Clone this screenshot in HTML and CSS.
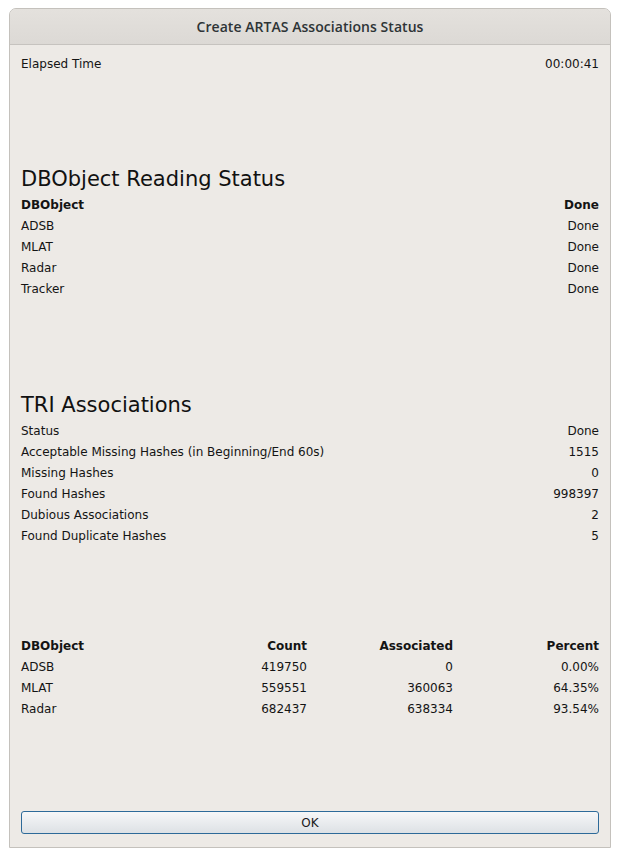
FILE: index.html
```html
<!DOCTYPE html>
<html>
<head>
<meta charset="utf-8">
<link rel="stylesheet" href="styles.css">
</head>
<body>
<div class="window">
  <div class="titlebar">Create ARTAS Associations Status</div>
  <div class="content">
    <div class="row"><span>Elapsed Time</span><span>00:00:41</span></div>

    <div class="spacer s1"></div>
    <h2 class="heading">DBObject Reading Status</h2>
    <div class="row bold"><span>DBObject</span><span>Done</span></div>
    <div class="row"><span>ADSB</span><span>Done</span></div>
    <div class="row"><span>MLAT</span><span>Done</span></div>
    <div class="row"><span>Radar</span><span>Done</span></div>
    <div class="row"><span>Tracker</span><span>Done</span></div>

    <div class="spacer s2"></div>
    <h2 class="heading">TRI Associations</h2>
    <div class="row"><span>Status</span><span>Done</span></div>
    <div class="row"><span>Acceptable Missing Hashes (in Beginning/End 60s)</span><span>1515</span></div>
    <div class="row"><span>Missing Hashes</span><span>0</span></div>
    <div class="row"><span>Found Hashes</span><span>998397</span></div>
    <div class="row"><span>Dubious Associations</span><span>2</span></div>
    <div class="row"><span>Found Duplicate Hashes</span><span>5</span></div>

    <div class="spacer s3"></div>
    <div class="grid bold"><span>DBObject</span><span class="r">Count</span><span class="r">Associated</span><span class="r">Percent</span></div>
    <div class="grid"><span>ADSB</span><span class="r">419750</span><span class="r">0</span><span class="r">0.00%</span></div>
    <div class="grid"><span>MLAT</span><span class="r">559551</span><span class="r">360063</span><span class="r">64.35%</span></div>
    <div class="grid"><span>Radar</span><span class="r">682437</span><span class="r">638334</span><span class="r">93.54%</span></div>

    <div class="spacer s4"></div>
    <button class="ok">OK</button>
  </div>
</div>
</body>
</html>
```
FILE: styles.css
```css
html, body {
  margin: 0;
  padding: 0;
  background: #ffffff;
}
body {
  padding: 8px 0 0 9px;
  font-family: "DejaVu Sans", sans-serif;
  font-size: 12px;
  color: #141414;
}
.window {
  width: 600px;
  height: 838px;
  border: 1px solid #c4c1bc;
  border-radius: 7px 7px 0 0;
  background: #edeae6;
  display: flex;
  flex-direction: column;
  overflow: hidden;
}
.titlebar {
  height: 35px;
  flex: none;
  border-bottom: 1px solid #c6c3bf;
  background: linear-gradient(#e4e1dd, #dcd9d5);
  display: flex;
  align-items: center;
  justify-content: center;
  font-family: "Open Sans", sans-serif;
  font-weight: 600;
  font-size: 14px;
  letter-spacing: 0.05px;
  color: #2e3436;
}
.content {
  flex: 1;
  display: flex;
  flex-direction: column;
  padding: 8px 11px 0 11px;
}
.row {
  height: 21px;
  display: flex;
  justify-content: space-between;
  align-items: center;
}
.bold {
  font-weight: bold;
}
.spacer {
  flex: none;
}
.s1 {
  height: 91px;
}
.s2 {
  height: 92px;
}
.s3 {
  height: 89px;
}
.s4 {
  height: 92px;
}
.heading {
  margin: 0 0 1px 0;
  height: 28px;
  line-height: 28px;
  font-size: 21px;
  font-weight: normal;
  color: #111;
}
.grid {
  height: 21px;
  display: grid;
  grid-template-columns: 140px 140px 140px 140px;
  column-gap: 6px;
  align-items: center;
}
.r {
  text-align: right;
}
.ok {
  height: 23px;
  width: 100%;
  margin: 0;
  padding: 0;
  border: 1px solid #2d6a99;
  border-radius: 3px;
  background: linear-gradient(#f6f7f8, #dde1e5);
  font-family: "DejaVu Sans", sans-serif;
  font-size: 12px;
  color: #1a1a1a;
}
```
